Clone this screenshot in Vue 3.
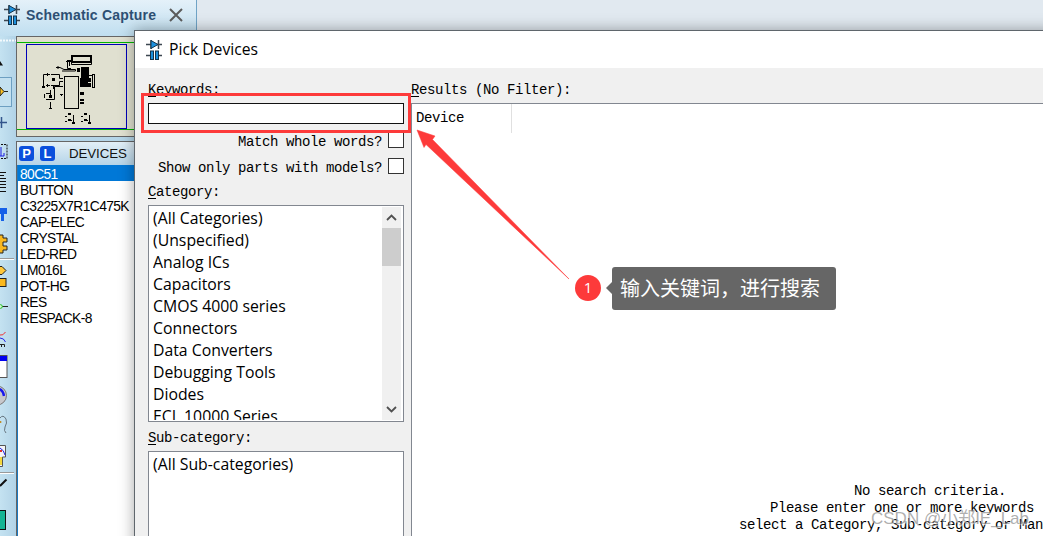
<template>
  <div class="desktop">
    <header class="tabbar">
      <div class="tab">
        <svg class="logo" width="18" height="20" viewBox="0 0 18 20">
          <path d="M1 4.500H17M6 0V9M13.500 0V9M1 15.500H6M13 15.500H17" stroke="#3c4650" stroke-width="1.500" />
          <path d="M6 0.500L13 4.500L6 8.500Z" fill="#1c8fdc" stroke="#14344c" />
          <rect x="5.500" y="11" width="3" height="8.500" fill="#1c8fdc" stroke="#14344c" />
          <rect x="10.500" y="11" width="3" height="8.500" fill="#1c8fdc" stroke="#14344c" />
        </svg>
        <span class="tab-title">Schematic Capture</span>
        <svg class="close" width="14" height="14" viewBox="0 0 14 14">
          <path d="M1 1L13 13M13 1L1 13" stroke="#5c5c5c" stroke-width="2" />
        </svg>
      </div>
    </header>

    <main class="workspace">
      <!-- mode toolbar, cut off on the left side -->
      <svg class="toolbar" width="16" height="500" viewBox="0 36 16 500">
        <path d="M0 40.500H16" stroke="#f4fafd" stroke-width="2" stroke-dasharray="2 1" />
        <path d="M0 61L3 65.500H0Z" fill="#111" />
        <rect x="-1" y="77.500" width="12.500" height="29" fill="#c3e0f0" stroke="#6d9fc2" />
        <path d="M0 87L4 91.500L0 96Z" fill="#ffc423" stroke="#222" />
        <path d="M4 91.500H8" stroke="#222" />
        <path d="M0 122.500H7M1.500 117V128" stroke="#33558c" stroke-width="1.500" />
        <rect x="-2" y="144.500" width="9" height="14" fill="none" stroke="#111" stroke-dasharray="2 1" />
        <path d="M0 156H4V153M1 147V156" stroke="#1a1ae0" fill="none" />
        <path d="M0 172.500H6M0 175.500H4M0 178.500H6M0 181.500H6M0 184.500H6M0 187.500H6M0 191.500H6" stroke="#111" />
        <path d="M0 208H7V214H4V221H1V214H0Z" fill="#1560e8" />
        <path d="M-1 235H3V238H7V242H3V246H7V250H3V253H-1Z" fill="#f9b81d" stroke="#222" />
        <path d="M0 258.500H14" stroke="#9a9a9a" />
        <path d="M0 259.500H14" stroke="#fff" />
        <path d="M-2 266.500H2L6 270.500L2 274.500H-2Z" fill="#ffc83a" stroke="#222" />
        <rect x="-2" y="278.500" width="8" height="8" fill="#f9b81d" stroke="#222" />
        <path d="M2 306.500H8" stroke="#222" />
        <circle cx="0.500" cy="306.500" r="1.800" fill="#d8f8d8" stroke="#20c020" />
        <path d="M0 335Q3 336 5.500 332" stroke="#f03030" fill="none" />
        <path d="M0 338Q4 338 5.500 342" stroke="#2525e8" fill="none" />
        <path d="M0 344.500H4.500V347M1.500 344V347" stroke="#222" fill="none" />
        <rect x="-2" y="355.500" width="9" height="22" fill="#fff" stroke="#555" />
        <rect x="0" y="356" width="7" height="5" fill="#0000f0" />
        <circle cx="-3" cy="395.500" r="9.500" fill="#c8c8cc" stroke="#777" />
        <path d="M-1 389Q3 390 4 396" stroke="#1818ee" stroke-width="2.500" fill="none" />
        <path d="M0 418Q3 414 6 419Q7.500 423 5 427Q3.500 431 6 433" stroke="#667580" fill="none" />
        <circle cx="0.500" cy="422" r="1" fill="#c08a20" />
        <path d="M-1 445.500H5.500V457H2.500V466.500H-1Z" fill="#f4f4f8" stroke="#555" />
        <path d="M0 457H2V465H0Z" fill="#f4d83c" />
        <path d="M0 448Q4 450 5 455" stroke="#2020e8" fill="none" />
        <rect x="0" y="450" width="2" height="2" fill="#e03030" />
        <path d="M0 472.500H14" stroke="#9a9a9a" />
        <path d="M0 473.500H14" stroke="#fff" />
        <path d="M0 486L6.500 479.500" stroke="#111" stroke-width="2" />
        <rect x="-2" y="510.500" width="7.500" height="19" fill="#14b494" stroke="#111" />
      </svg>

      <aside class="sidebar">
        <!-- overview of the sheet -->
        <svg class="overview" width="120" height="101" viewBox="16 36 120 101">
          <rect x="16.500" y="36.500" width="130" height="100" fill="#e0e0d0" stroke="#666" />
          <path d="M17 42.500H136M17 129.500H136" stroke="#00b400" />
          <rect x="26.500" y="44.500" width="100" height="84" fill="none" stroke="#0000b8" />
          <g fill="none" stroke="#000">
            <rect x="72" y="56" width="19" height="6" stroke-width="2" />
            <path d="M71.500 62V64.500H91.500V62M67.500 60.500H71M67.500 60V68.500H71M69.500 60V66M66 61.500H72M56 67.500H60L64 69.500H75.500V71H62M58 66V69" />
            <rect x="64.500" y="76.500" width="14" height="32" />
            <path d="M43.500 87V74.500H48M46 74.500H50M47.500 73V76M51 74.500H59.500V78.500H63M42 87H45M46 85.500H50M47.500 84V87M51 85.500H59.500V81.500H63M53.500 86V89M63 86.500H54.500V99.500H46" />
            <path d="M50.500 90V95M46 93.500H50M44.500 94V98M50.500 102V109M49 108.500H52M60 94.500H63M61.500 95V96" />
            <rect x="92.500" y="74.500" width="2" height="13" />
            <path d="M89 75.500H92M91 86.500H89M65 116.500H67M68 120.500H72M73.500 115V123M65 121.500H67M81 116.500H83M84 120.500H88M89.500 115V123M81 121.500H83" />
          </g>
          <path d="M81 67H89V78H91V82H88V83H91V87H80V78H81ZM77 68H80V72H77ZM52 78H55V81H52ZM42 86H45V88H42ZM49 95H52V98H49ZM80 92H84V95H80ZM80 99H84V101H80ZM80 102H84V104H80ZM68 113H71V115H68ZM84 113H87V115H84ZM68 119H71V121H68ZM84 119H87V121H84ZM72 122H75V124H72ZM88 122H91V124H88Z" />
        </svg>

        <section class="devices">
          <div class="devices-head">
            <b class="key">P</b>
            <b class="key">L</b>
            <span class="devices-title">DEVICES</span>
          </div>
          <ul class="device-list">
            <li v-for="name in devices" :key="name" :class="{ selected: name === selected }">{{ name }}</li>
          </ul>
        </section>
      </aside>
    </main>

    <div class="dialog">
      <div class="dialog-title">
        <svg class="logo" width="18" height="20" viewBox="0 0 18 20">
          <path d="M1 4.500H17M6 0V9M13.500 0V9M1 15.500H6M13 15.500H17" stroke="#3c4650" stroke-width="1.500" />
          <path d="M6 0.500L13 4.500L6 8.500Z" fill="#1c8fdc" stroke="#14344c" />
          <rect x="5.500" y="11" width="3" height="8.500" fill="#1c8fdc" stroke="#14344c" />
          <rect x="10.500" y="11" width="3" height="8.500" fill="#1c8fdc" stroke="#14344c" />
        </svg>
        <span class="dialog-name">Pick Devices</span>
      </div>

      <div class="dialog-body">
        <div class="filters">
          <label class="caption"><u>K</u>eywords:</label>
          <input v-model="keywords" class="keywords" type="text" />
          <label class="check"><span>Match whole words?</span><i class="box"></i></label>
          <label class="check second"><span>Show only parts with models?</span><i class="box"></i></label>
          <label class="caption category"><u>C</u>ategory:</label>
          <div class="listbox categories">
            <ul>
              <li v-for="item in categories" :key="item">{{ item }}</li>
            </ul>
            <div class="scrollbar">
              <svg width="19" height="21" viewBox="0 0 19 21">
                <path d="M5 13L9.500 8.500L14 13" fill="none" stroke="#505050" stroke-width="1.800" />
              </svg>
              <div class="thumb"></div>
              <svg class="down" width="19" height="21" viewBox="0 0 19 21">
                <path d="M5 8L9.500 12.500L14 8" fill="none" stroke="#505050" stroke-width="1.800" />
              </svg>
            </div>
          </div>
          <label class="caption sub"><u>S</u>ub-category:</label>
          <div class="listbox subcategories">
            <ul>
              <li>(All Sub-categories)</li>
            </ul>
          </div>
        </div>

        <div class="results">
          <label class="caption"><u>R</u>esults (No Filter):</label>
          <div class="results-table">
            <div class="column">Device</div>
            <div class="empty">
              <p class="line-1">No search criteria.</p>
              <p class="line-2">Please enter one or more keywords</p>
              <p class="line-3">select a Category, Sub-category or Man</p>
            </div>
          </div>
        </div>
      </div>
    </div>

    <!-- annotations drawn over the dialog -->
    <div class="highlight"></div>
    <svg class="arrow" width="154" height="152" viewBox="416 129 154 152">
      <path d="M417 130L435 136L432.500 139.500L569 279L426 144.500L424 147.500Z" fill="#fd3a3a" stroke="#fd3a3a" stroke-width="0.500" />
    </svg>
    <div class="step">1</div>
    <div class="hint">输入关键词，进行搜索</div>
    <div class="watermark">CSDN @小郑IE_Lab</div>
  </div>
</template>

<script setup>
import { ref } from 'vue'

const keywords = ref('')
const selected = ref('80C51')

const devices = [
  '80C51',
  'BUTTON',
  'C3225X7R1C475K',
  'CAP-ELEC',
  'CRYSTAL',
  'LED-RED',
  'LM016L',
  'POT-HG',
  'RES',
  'RESPACK-8'
]

const categories = [
  '(All Categories)',
  '(Unspecified)',
  'Analog ICs',
  'Capacitors',
  'CMOS 4000 series',
  'Connectors',
  'Data Converters',
  'Debugging Tools',
  'Diodes',
  'ECL 10000 Series'
]
</script>

<style>
body {
  margin: 0;
  overflow: hidden;
}
</style>

<style scoped>
.desktop {
  position: relative;
  width: 1043px;
  height: 536px;
  overflow: hidden;
  background: #e1e9f0;
}

ul,
p {
  margin: 0;
  padding: 0;
  list-style: none;
}

.tabbar {
  height: 36px;
}

.tab {
  display: flex;
  align-items: center;
  box-sizing: border-box;
  width: 197px;
  height: 36px;
  padding: 0 0 7px 3px;
  border-right: 1px solid #6fa3c6;
  background: linear-gradient(#e4f1f9, #c0dff0);
}

.tab-title {
  width: 134px;
  margin: 0 9px 0 5px;
  color: #2d4f73;
  font: bold 14px "Liberation Sans", Arial, sans-serif;
  letter-spacing: 0.2px;
  white-space: nowrap;
}

.close {
  margin-top: 1px;
}

.workspace {
  display: flex;
  height: 500px;
  background: #b4d5e8;
}

.toolbar {
  flex: none;
  background: linear-gradient(90deg, #c4e2f1, #b2d3e7);
}

.sidebar {
  display: flex;
  flex-direction: column;
  width: 120px;
}

.overview {
  flex: none;
}

.devices {
  flex: 1;
  margin-top: 4px;
  border: solid #666;
  border-width: 1px 0 0 1px;
  background: #fff;
}

.devices-head {
  display: flex;
  align-items: center;
  height: 23px;
  padding-left: 2px;
  background: linear-gradient(#e2eff7, #b5d4e8);
}

.key {
  width: 15px;
  height: 15px;
  margin-right: 6px;
  border-radius: 3px;
  background: #0b4fdc;
  color: #fff;
  font: bold 13px/15px "Liberation Sans", Arial, sans-serif;
  text-align: center;
}

.devices-title {
  margin-left: 8px;
  color: #111;
  font: 13.3px "Liberation Sans", Arial, sans-serif;
  letter-spacing: -0.1px;
}

.device-list {
  border-left: 1px solid #1b78c0;
  height: 371px;
}

.device-list li {
  height: 16px;
  padding: 1px 0 0 2px;
  box-sizing: border-box;
  color: #000;
  font: 13.8px/17px "Liberation Sans", Arial, sans-serif;
  letter-spacing: -0.6px;
  white-space: nowrap;
}

.device-list .selected {
  background: #0078d7;
  color: #fff;
}

.dialog {
  position: absolute;
  top: 30px;
  left: 134px;
  display: flex;
  flex-direction: column;
  width: 920px;
  height: 520px;
  border: 1px solid #5f666c;
  background: #f0f0f0;
  box-shadow: 0 0 14px rgba(0, 0, 0, 0.35);
}

.dialog-title {
  display: flex;
  align-items: center;
  gap: 6px;
  flex: none;
  height: 37px;
  padding-left: 10px;
  background: #fff;
  color: #000;
  font: 15.7px "Open Sans", "Noto Sans", sans-serif;
}

.dialog-name {
  margin-top: -2px;
}

.dialog-body {
  display: flex;
  flex: 1;
  gap: 7px;
  padding: 13px 0 0 13px;
  color: #000;
  font: 14px/18px "Liberation Mono", "Courier New", monospace;
  letter-spacing: -0.4px;
}

.filters {
  display: flex;
  flex: none;
  flex-direction: column;
  width: 256px;
}

.caption {
  height: 16px;
  white-space: pre;
}

.caption u {
  text-underline-offset: 2px;
}

.keywords {
  box-sizing: border-box;
  height: 21px;
  margin: 6px 0 0;
  padding: 0 3px;
  border: 1px solid #111;
  border-radius: 0;
  outline: none;
  background: #fff;
}

.check {
  display: flex;
  align-items: center;
  justify-content: flex-end;
  gap: 6px;
  height: 16px;
  margin-top: 8px;
}

.check span {
  padding-top: 3px;
}

.check.second {
  margin-top: 10px;
}

.box {
  box-sizing: border-box;
  width: 16px;
  height: 16px;
  border: 1px solid #333;
  background: #fff;
}

.category {
  margin-top: 9px;
}

.sub {
  margin-top: 7px;
}

.listbox {
  display: flex;
  justify-content: space-between;
  box-sizing: border-box;
  flex: none;
  margin-top: 6px;
  padding: 1px 2px 1px 4px;
  border: 1px solid #828790;
  background: #fff;
  font: 15.8px/22px "Open Sans", "Noto Sans", sans-serif;
  letter-spacing: 0;
  overflow: hidden;
}

.listbox ul {
  overflow: hidden;
}

.listbox li {
  height: 22px;
  white-space: nowrap;
}

.categories {
  height: 217px;
}

.subcategories {
  height: 110px;
}

.scrollbar {
  display: flex;
  flex-direction: column;
  width: 19px;
  background: #f0f0f0;
}

.thumb {
  height: 38px;
  background: #cdcdcd;
}

.down {
  margin-top: auto;
}

.results {
  display: flex;
  flex: 1;
  flex-direction: column;
}

.results-table {
  flex: 1;
  margin-top: 6px;
  border: solid #828790;
  border-width: 1px 0 0 1px;
  background: #fff;
}

.column {
  box-sizing: border-box;
  width: 100px;
  height: 29px;
  padding: 5px 0 0 4px;
  border-right: 1px solid #e0e0e0;
}

.empty {
  margin-top: 350px;
  line-height: 17px;
  white-space: pre;
}

.line-1 {
  padding-left: 442px;
}

.line-2 {
  padding-left: 358px;
}

.line-3 {
  padding-left: 327px;
}

.highlight {
  position: absolute;
  top: 93px;
  left: 141px;
  box-sizing: border-box;
  width: 270px;
  height: 40px;
  border: 3px solid #fd3a3a;
}

.arrow {
  position: absolute;
  top: 129px;
  left: 416px;
}

.step {
  position: absolute;
  top: 275px;
  left: 575px;
  width: 26px;
  height: 26px;
  border-radius: 50%;
  background: #fd3a3a;
  color: #fff;
  font: 15px/24px "Open Sans", "Noto Sans", sans-serif;
  text-align: center;
}

.hint {
  position: absolute;
  top: 267px;
  left: 612px;
  box-sizing: border-box;
  width: 224px;
  height: 43px;
  padding-left: 8px;
  border-radius: 3px;
  background: #666;
  color: #fff;
  font: 20px/42px "Noto Sans CJK SC", sans-serif;
  white-space: nowrap;
}

.hint::before {
  content: '';
  position: absolute;
  top: 15px;
  left: -6px;
  border: solid transparent;
  border-width: 6px 6px 6px 0;
  border-right-color: #666;
}

.watermark {
  position: absolute;
  top: 507px;
  left: 871px;
  color: rgba(130, 130, 130, 0.65);
  font: 17px/24px "Liberation Sans", "Noto Sans CJK SC", sans-serif;
  text-shadow: 1px 1px 1px rgba(255, 255, 255, 0.8);
  white-space: nowrap;
}
</style>
